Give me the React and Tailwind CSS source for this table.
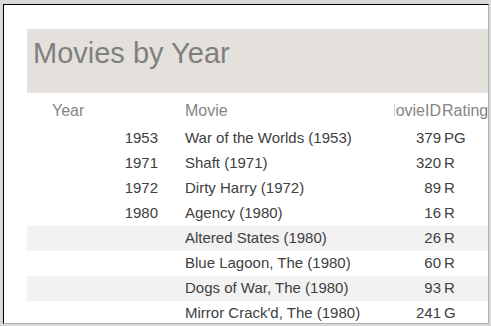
import React from "react";

const rows = [
  { year: "1953", movie: "War of the Worlds (1953)", id: "379", rating: "PG", shade: false },
  { year: "1971", movie: "Shaft (1971)", id: "320", rating: "R", shade: false },
  { year: "1972", movie: "Dirty Harry (1972)", id: "89", rating: "R", shade: false },
  { year: "1980", movie: "Agency (1980)", id: "16", rating: "R", shade: false },
  { year: "", movie: "Altered States (1980)", id: "26", rating: "R", shade: true },
  { year: "", movie: "Blue Lagoon, The (1980)", id: "60", rating: "R", shade: false },
  { year: "", movie: "Dogs of War, The (1980)", id: "93", rating: "R", shade: true },
  { year: "", movie: "Mirror Crack'd, The (1980)", id: "241", rating: "G", shade: false },
];

export default function App() {
  return (
    <div className="w-[491px] h-[326px] bg-[#d9d9d9] pt-[4px] pl-[3px] pr-[2px] pb-[2px] font-['Liberation_Sans',Arial,sans-serif]">
      <div className="w-full h-full bg-white border-t border-l border-t-black border-l-black border-r border-b border-r-[#b0b0b0] border-b-[#b0b0b0] overflow-hidden">
        <div className="pl-[23px] pt-[24px] w-[640px]">
          <div className="h-[64px] bg-[#e4e1dc] pl-[6px] pt-[8px]">
            <div className="text-[29px] leading-[32px] text-[#7f7f7f] whitespace-nowrap">Movies by Year</div>
          </div>
          <div className="mt-[5px] h-[25px] flex items-center text-[16px] text-[#858585] whitespace-nowrap">
            <div className="w-[131px] pl-[25px]">Year</div>
            <div className="ml-[27px] w-[209px]">Movie</div>
            <div className="w-[47px] flex justify-end overflow-hidden">
              <span className="shrink-0">MovieID</span>
            </div>
            <div className="pl-[1px]">Rating</div>
          </div>
          <div className="mt-[3px]">
            {rows.map((r, i) => (
              <div
                key={i}
                className={`h-[25px] flex items-center text-[15px] text-[#404040] whitespace-nowrap ${r.shade ? "bg-[#f2f2f2]" : "bg-white"}`}
              >
                <div className="w-[131px] text-right">{r.year}</div>
                <div className="ml-[27px] w-[209px]">{r.movie}</div>
                <div className="w-[47px] text-right">{r.id}</div>
                <div className="pl-[3px]">{r.rating}</div>
              </div>
            ))}
          </div>
        </div>
      </div>
    </div>
  );
}
